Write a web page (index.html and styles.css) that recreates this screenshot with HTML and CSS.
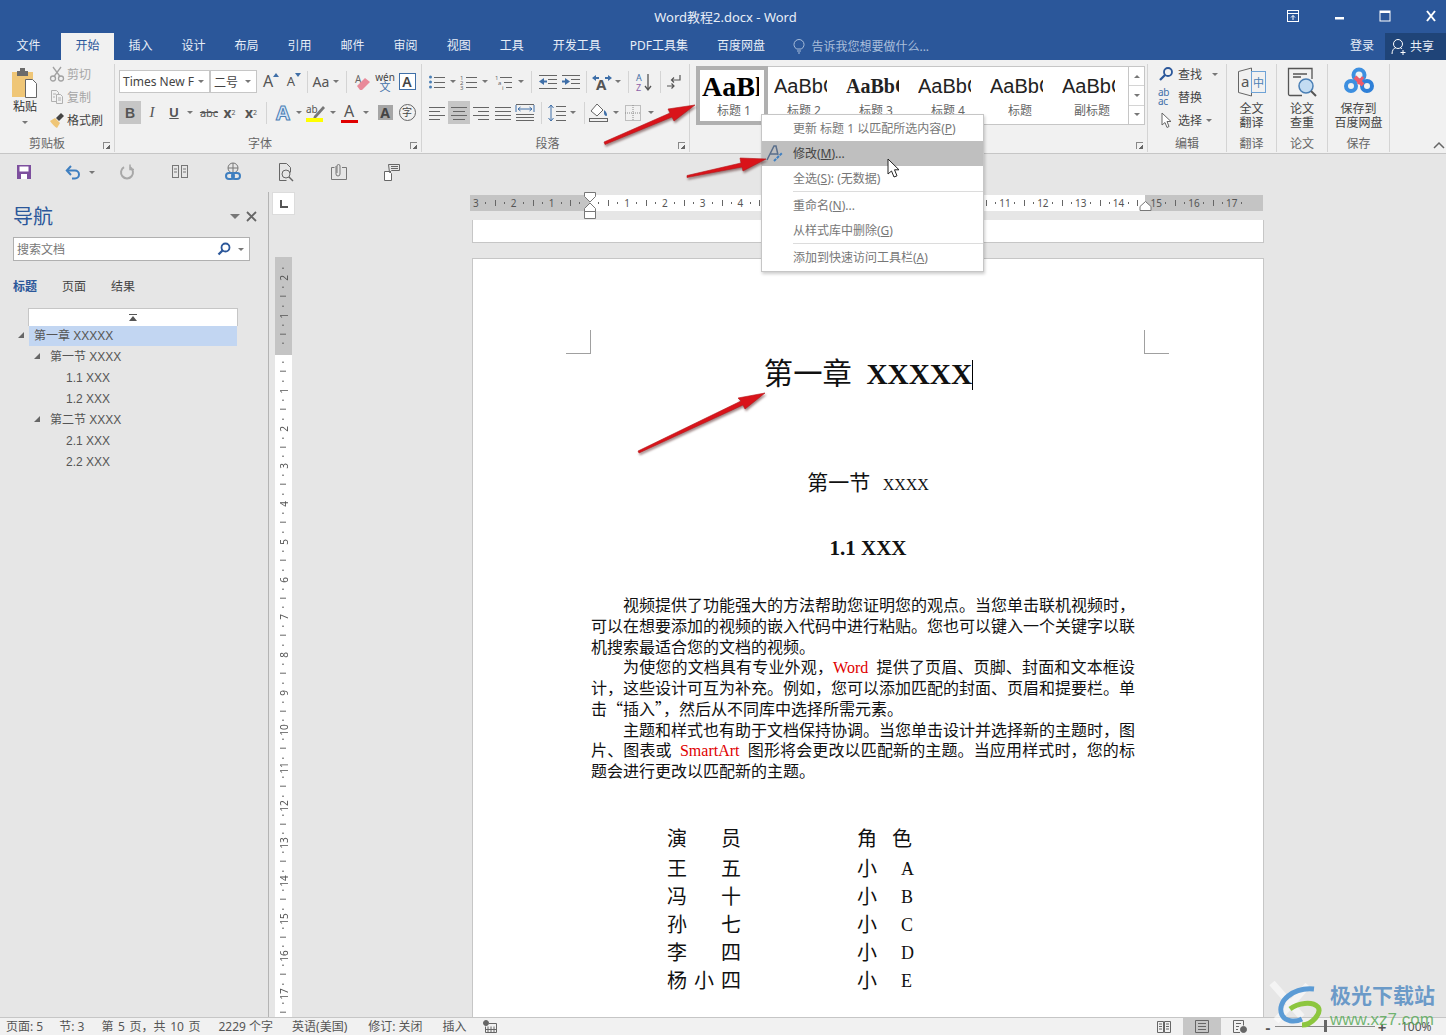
FILE: index.html
```html
<!DOCTYPE html>
<html lang="zh-CN">
  <head>
    <meta charset="UTF-8" />
    <title>Word教程2.docx - Word</title>
    <link rel="stylesheet" href="styles.css">
  </head>
  <body>
    <div class="app">
      <!-- title bar -->
      <div class="titlebar">
        <span class="doc-title">Word教程2.docx - Word</span>
        <div class="win-btns">
          <svg class="win-btn" width="14" height="14" viewBox="0 0 14 14" fill="none" stroke="#fff"><rect x="1.5" y="1.5" width="11" height="11"/><path d="M1.5 4.5h11M7 11V6.5M5 8.5l2-2 2 2"/></svg>
          <svg class="win-btn" width="14" height="14" viewBox="0 0 14 14" fill="#fff"><rect x="3" y="8" width="9" height="2.5"/></svg>
          <svg class="win-btn" width="14" height="14" viewBox="0 0 14 14" fill="none" stroke="#fff"><rect x="2" y="2" width="10" height="10"/><path d="M2 3h10" stroke-width="2"/></svg>
          <svg class="win-btn" width="14" height="14" viewBox="0 0 14 14" fill="none" stroke="#fff" stroke-width="2"><path d="M3 2l8 10M11 2L3 12"/></svg>
        </div>
      </div>

      <!-- tabs -->
      <div class="tabbar">
        <span class="tab tab-file">文件</span>
        <span class="tab active">开始</span>
        <span class="tab">插入</span>
        <span class="tab">设计</span>
        <span class="tab">布局</span>
        <span class="tab">引用</span>
        <span class="tab">邮件</span>
        <span class="tab">审阅</span>
        <span class="tab">视图</span>
        <span class="tab">工具</span>
        <span class="tab">开发工具</span>
        <span class="tab">PDF工具集</span>
        <span class="tab">百度网盘</span>
        <div class="tell-me">
          <svg width="12" height="15" viewBox="0 0 12 15" fill="none" stroke="#a9bedb"><path d="M3.5 10C2 8.500 1 7.500 1 5.500a5 5 0 0 1 10 0c0 2-1 3-2.500 4.500zM4 12h4M5 14h2"/></svg>
          <span>告诉我您想要做什么...</span>
        </div>
        <span class="login">登录</span>
        <div class="share">
          <svg width="16" height="18" viewBox="0 0 16 18" fill="none" stroke="#fff"><circle cx="7" cy="6" r="4.500"/><path d="M1 16c0-4 2-6 4-6.500M9 9.500c1 .3 1.500.7 2 1.500M12 12v5M9.500 14.500h5"/></svg>
          <span>共享</span>
        </div>
      </div>

      <!-- ribbon -->
      <div class="ribbon">
        <div class="group g-clip">
          <div class="clip-body">
            <div class="paste">
              <svg width="28" height="30" viewBox="0 0 28 30"><rect x="1" y="4" width="21" height="25" fill="#efc677"/><rect x="6" y="3" width="11" height="5" fill="#6b6b6b"/><rect x="9" y="0" width="5" height="4" fill="#6b6b6b"/><path d="M14.500 11.500h7l4 4v14h-11z" fill="#fff" stroke="#666"/></svg>
              <span class="paste-label">粘贴</span>
              <i class="caret"></i>
            </div>
            <div class="clip-list">
              <div class="clip-row off">
                <svg width="16" height="16" viewBox="0 0 16 16" fill="none" stroke="#a2a2a2" stroke-width="1.300"><circle cx="4" cy="12.500" r="2.500"/><circle cx="12" cy="12.500" r="2.500"/><path d="M5 10.500L12 1M11 10.500L4 1"/></svg>
                <span>剪切</span>
              </div>
              <div class="clip-row off">
                <svg width="16" height="16" viewBox="0 0 16 16" fill="#f1f1f1" stroke="#b0b0b0"><path d="M2.500 1.500h5l2 2v9h-7z"/><path d="M7.500 5.500h4l2 2v7h-6z"/><path d="M4 5h3M4 8h2M9 9h3M9 11h3" fill="none"/></svg>
                <span>复制</span>
              </div>
              <div class="clip-row">
                <svg width="16" height="16" viewBox="0 0 16 16"><path d="M1 9l5-3 5 5-3 5c-2-1-5-4-7-7z" fill="#efc677"/><path d="M7 6l5-5 3 3-5 5z" fill="#444"/></svg>
                <span>格式刷</span>
              </div>
            </div>
          </div>
          <div class="group-label">剪贴板</div>
          <i class="launcher"></i>
        </div>

        <div class="group g-font">
          <div class="rows">
            <div class="row">
              <div class="combo combo-font"><span>Times New F</span><i class="caret"></i></div>
              <div class="combo combo-size"><span>二号</span><i class="caret"></i></div>
              <div class="ib w24 ml1 grow-a">A<svg width="6" height="4" viewBox="0 0 6 4"><path d="M0 4l3-4 3 4z" fill="#3f6fa8"/></svg></div>
              <div class="ib w22 shrink-a">A<svg width="6" height="4" viewBox="0 0 6 4"><path d="M0 0l3 4 3-4z" fill="#3f6fa8"/></svg></div>
              <i class="vsep s-a"></i>
              <div class="ib w18 case-a">Aa</div>
              <div class="ib w12"><i class="caret"></i></div>
              <i class="vsep s-b"></i>
              <div class="ib w22">
                <svg width="18" height="18" viewBox="0 0 18 18"><text x="1" y="10" class="t-a">A</text><path d="M3 13l8-8 5 4-8 8H6z" fill="#e98a9a"/></svg>
              </div>
              <div class="ib w22 wen"><span class="wen-top">wén</span><span class="wen-bot">文</span></div>
              <div class="ib w22"><span class="box-a">A</span></div>
            </div>
            <div class="row">
              <div class="ib w22 on t-bold">B</div>
              <div class="ib w22 t-ital">I</div>
              <div class="ib w22 t-under">U</div>
              <div class="ib w10"><i class="caret"></i></div>
              <div class="ib w24 ml1 t-strike">abc</div>
              <div class="ib w21 mln2 t-sub">x<sub>2</sub></div>
              <div class="ib w22 t-sub">x<sup>2</sup></div>
              <i class="vsep s-c"></i>
              <div class="ib w22 fx-a">A</div>
              <div class="ib w10"><i class="caret"></i></div>
              <div class="ib w24">
                <svg width="22" height="20" viewBox="0 0 22 20"><text x="1" y="10" class="t-ab">ab</text><path d="M9 13l9-10 2 2-9 10-3 1z" fill="#777"/><rect x="1" y="15" width="17" height="4" fill="#ffff00"/></svg>
              </div>
              <div class="ib w10"><i class="caret"></i></div>
              <div class="ib w22 red-a"><span>A</span></div>
              <div class="ib w12"><i class="caret"></i></div>
              <div class="ib w22 ml1"><span class="gray-a">A</span></div>
              <div class="ib w22"><span class="circle-zi">字</span></div>
            </div>
          </div>
          <div class="group-label">字体</div>
          <i class="launcher"></i>
        </div>

        <div class="group g-para">
          <div class="rows">
            <div class="row">
              <div class="ib w22 ml4"><svg width="18" height="16" viewBox="0 0 18 16" stroke="#666" fill="#4a7fb5"><circle cx="2.500" cy="3" r="1.500" stroke="none"/><circle cx="2.500" cy="8" r="1.500" stroke="none"/><circle cx="2.500" cy="13" r="1.500" stroke="none"/><path d="M6 3.500h11M6 8.500h11M6 13.500h11"/></svg></div>
              <div class="ib w10"><i class="caret"></i></div>
              <div class="ib w22"><svg width="18" height="16" viewBox="0 0 18 16" stroke="#666"><text x="0" y="6" class="t-n">1</text><text x="0" y="11" class="t-n">2</text><text x="0" y="16" class="t-n">3</text><path d="M6 3.500h11M6 8.500h11M6 13.500h11"/></svg></div>
              <div class="ib w10"><i class="caret"></i></div>
              <div class="ib w24 ml1"><svg width="18" height="16" viewBox="0 0 18 16" stroke="#666"><text x="0" y="6" class="t-n">1</text><text x="3" y="11" class="t-n">a</text><text x="7" y="16" class="t-n">i</text><path d="M5 3.500h12M9 8.500h8M11 13.500h6"/></svg></div>
              <div class="ib w10"><i class="caret"></i></div>
              <i class="vsep s-d"></i>
              <div class="ib w22"><svg width="20" height="16" viewBox="0 0 20 16" stroke="#666"><path d="M1 1.500h18M10 5.500h9M10 9.500h9M1 14.500h18"/><path d="M1 7.500l5-3.500v7z" fill="#3f6fa8" stroke="none"/><path d="M5 7.500h4" stroke="#3f6fa8" stroke-width="2"/></svg></div>
              <div class="ib w23"><svg width="20" height="16" viewBox="0 0 20 16" stroke="#666"><path d="M1 1.500h18M10 5.500h9M10 9.500h9M1 14.500h18"/><path d="M9 7.500l-5-3.500v7z" fill="#3f6fa8" stroke="none"/><path d="M1 7.500h4" stroke="#3f6fa8" stroke-width="2"/></svg></div>
              <i class="vsep s-e"></i>
              <div class="ib w22"><svg width="22" height="18" viewBox="0 0 22 18"><text x="5" y="17" class="t-big">A</text><path d="M1 5l4-3v2h3v2H5v2zM21 5l-4-3v2h-3v2h3v2z" fill="#3f6fa8"/></svg></div>
              <div class="ib w10"><i class="caret"></i></div>
              <i class="vsep s-f"></i>
              <div class="ib w22"><svg width="18" height="20" viewBox="0 0 18 20" fill="none"><text x="1" y="9" class="t-az1">A</text><text x="1" y="19" class="t-az2">Z</text><path d="M13 2v15M10 14l3 4 3-4" stroke="#555" stroke-width="1.300"/></svg></div>
              <i class="vsep s-g"></i>
              <div class="ib w22"><svg width="16" height="16" viewBox="0 0 16 16" fill="none" stroke="#555" stroke-width="1.200"><path d="M14 1v5H6M8 3.500L5.500 6 8 8.500"/><path d="M1 12h7M5.500 9.500L8 12l-2.500 2.500"/></svg></div>
            </div>
            <div class="row">
              <div class="ib w22 ml4"><svg width="18" height="14" viewBox="0 0 18 14" stroke="#666"><path d="M1 1.500h16M1 5.500h11M1 9.500h16M1 13.500h11"/></svg></div>
              <div class="ib w22 on"><svg width="18" height="14" viewBox="0 0 18 14" stroke="#666"><path d="M1 1.500h16M3 5.500h12M1 9.500h16M3 13.500h12"/></svg></div>
              <div class="ib w22"><svg width="18" height="14" viewBox="0 0 18 14" stroke="#666"><path d="M1 1.500h16M6 5.500h11M1 9.500h16M6 13.500h11"/></svg></div>
              <div class="ib w22"><svg width="18" height="14" viewBox="0 0 18 14" stroke="#666"><path d="M1 1.500h16M1 5.500h16M1 9.500h16M1 13.500h16"/></svg></div>
              <div class="ib w22"><svg width="20" height="20" viewBox="0 0 20 20" stroke="#666" fill="none"><path d="M1 1.500h18M1 11.500h18M1 14.500h18M1 17.500h18"/><path d="M1 2v7M19 2v7" stroke="#3f6fa8"/><path d="M3 6h14M3 6l2.500-2M3 6l2.500 2M17 6l-2.500-2M17 6l-2.500 2" stroke="#3f6fa8"/></svg></div>
              <i class="vsep s-h"></i>
              <div class="ib w22"><svg width="20" height="20" viewBox="0 0 20 20" fill="none" stroke="#666"><path d="M9 3.500h10M9 8.500h10M9 12.500h10M9 17.500h10"/><path d="M4 2v16M1.500 5L4 2l2.500 3M1.500 15L4 18l2.500-3" stroke="#3f6fa8"/></svg></div>
              <div class="ib w10"><i class="caret"></i></div>
              <i class="vsep s-i"></i>
              <div class="ib w24"><svg width="22" height="20" viewBox="0 0 22 20" fill="#fff" stroke="#666"><path d="M3 8l6-7 6 6-6 6z"/><path d="M16 7c2 2 3 3 3 5s-3 1-3-2z" fill="#3f6fa8" stroke="none"/><rect x="1.500" y="15.500" width="18" height="3" fill="#f1f1f1"/></svg></div>
              <div class="ib w10"><i class="caret"></i></div>
              <div class="ib w24"><svg width="18" height="18" viewBox="0 0 18 18" fill="none" stroke="#8a8a8a" stroke-dasharray="1 1"><rect x="1.500" y="1.500" width="15" height="15"/><path d="M9 1v16M1 9h16"/></svg></div>
              <div class="ib w12"><i class="caret"></i></div>
            </div>
          </div>
          <div class="group-label">段落</div>
          <i class="launcher"></i>
        </div>

        <div class="group g-styles">
          <div class="gallery">
            <div class="style-item selected"><span class="pv pv-h1">AaBl</span><span class="style-name">标题 1</span></div>
            <div class="style-item"><span class="pv">AaBbC</span><span class="style-name">标题 2</span></div>
            <div class="style-item"><span class="pv pv-h3">AaBbC</span><span class="style-name">标题 3</span></div>
            <div class="style-item"><span class="pv">AaBbC</span><span class="style-name">标题 4</span></div>
            <div class="style-item"><span class="pv">AaBbC</span><span class="style-name">标题</span></div>
            <div class="style-item"><span class="pv">AaBbC</span><span class="style-name">副标题</span></div>
            <div class="gallery-scroll">
              <div class="gs-btn"><i class="tri-up"></i></div>
              <div class="gs-btn"><i class="caret"></i></div>
              <div class="gs-btn gs-more"><i class="caret"></i></div>
            </div>
          </div>
          <i class="launcher"></i>
        </div>

        <div class="group g-edit">
          <div class="edit-list">
            <div class="edit-row">
              <svg width="16" height="16" viewBox="0 0 16 16" fill="none" stroke="#2b579a" stroke-width="1.800"><circle cx="10" cy="6" r="4"/><path d="M7 9l-5 5" stroke-width="2.300"/></svg>
              <span>查找</span><i class="caret edit-caret"></i>
            </div>
            <div class="edit-row">
              <span class="abac">ab<br>ac</span>
              <span>替换</span>
            </div>
            <div class="edit-row">
              <svg width="16" height="17" viewBox="0 0 16 17" fill="#fff" stroke="#666"><path d="M4 1v12l3-2.500 2 5 2-1-2-5h4z"/></svg>
              <span>选择</span><i class="caret"></i>
            </div>
          </div>
          <div class="group-label">编辑</div>
        </div>

        <div class="group g-trans">
          <div class="big-btn">
            <svg width="30" height="30" viewBox="0 0 30 30" fill="none"><path d="M1.500 4.500l13-3.500v28l-13-3.500z" stroke="#666"/><text x="4" y="20" class="t-a-big">a</text><rect x="14.500" y="4.500" width="14" height="21" stroke="#6fa3d6"/><text x="16" y="20" class="t-zh">中</text></svg>
            <span>全文</span><span>翻译</span>
          </div>
          <div class="group-label">翻译</div>
        </div>

        <div class="group g-paper">
          <div class="big-btn">
            <svg width="30" height="30" viewBox="0 0 30 30" fill="none"><path d="M15 28.500H3a1.500 1.500 0 0 1-1.500-1.500V1.500H25V12" stroke="#555" stroke-width="1.300"/><path d="M6 7h14M6 10h8" stroke="#555" stroke-width="1.500"/><circle cx="19" cy="19" r="7" fill="#c3dcf2" stroke="#4a7fb5" stroke-width="1.500"/><path d="M24 24l5 5" stroke="#555" stroke-width="2"/></svg>
            <span>论文</span><span>查重</span>
          </div>
          <div class="group-label">论文</div>
        </div>

        <div class="group g-save">
          <div class="big-btn">
            <svg width="30" height="30" viewBox="0 0 30 30" fill="none"><circle cx="15" cy="8" r="5.500" stroke="#3d8fe0" stroke-width="4"/><circle cx="7" cy="19" r="5" stroke="#3d8fe0" stroke-width="4"/><circle cx="23" cy="19" r="5" stroke="#2f80d8" stroke-width="4"/><path d="M11 10l8 8" stroke="#ef5a6a" stroke-width="4"/><path d="M19 10l-5 7" stroke="#ef5a6a" stroke-width="3"/></svg>
            <span>保存到</span><span>百度网盘</span>
          </div>
          <div class="group-label">保存</div>
        </div>

        <svg class="ribbon-collapse" width="12" height="8" viewBox="0 0 12 8" fill="none" stroke="#666" stroke-width="1.500"><path d="M1 7l5-5 5 5"/></svg>
      </div>

      <!-- quick access -->
      <div class="qat">
        <div class="qb q-save"><svg width="16" height="16" viewBox="0 0 16 16"><path d="M1 1h14v14H1z" fill="#7d4f9e"/><rect x="3.500" y="2.500" width="9" height="5" fill="#fff"/><rect x="5" y="10" width="6" height="5" fill="#fff"/></svg></div>
        <div class="qb q-undo"><svg width="16" height="16" viewBox="0 0 16 16" fill="none" stroke="#3f7fc0" stroke-width="2"><path d="M2 6.500h8a4 4 0 0 1 0 8H7"/><path d="M6 2L1.800 6.500 6 11"/></svg></div>
        <div class="qb q-caret"><i class="caret"></i></div>
        <div class="qb q-redo"><svg width="16" height="16" viewBox="0 0 16 16" fill="none" stroke="#a8a8a8" stroke-width="2"><path d="M5 3.200A6 6 0 1 0 11 3.200"/><path d="M11 .5v5h4" stroke-width="1.500"/></svg></div>
        <div class="qb q-far"><svg width="18" height="14" viewBox="0 0 18 14" fill="none" stroke="#777"><rect x="1.500" y=".5" width="6" height="12"/><rect x="10.500" y=".5" width="6" height="12"/><path d="M3 4h3M3 7h3M12 4h3M12 7h3"/></svg></div>
        <div class="qb q-far"><svg width="18" height="20" viewBox="0 0 18 20" fill="none"><circle cx="9" cy="6" r="5" stroke="#777"/><path d="M4 6h10M9 1v10" stroke="#777"/><rect x="2" y="11" width="8" height="6" rx="3" stroke="#3f7fc0" stroke-width="2"/><rect x="8" y="11" width="8" height="6" rx="3" stroke="#3f7fc0" stroke-width="2"/></svg></div>
        <div class="qb q-far"><svg width="18" height="20" viewBox="0 0 18 20" fill="none" stroke="#666"><path d="M2.500 1.500h7l4 4v5M2.500 1.500v17h7"/><circle cx="9" cy="12" r="4"/><path d="M12 15l4 4" stroke-width="1.500"/></svg></div>
        <div class="qb q-far"><svg width="18" height="18" viewBox="0 0 18 18" fill="none" stroke="#777"><path d="M1.500 4.500h3M12 4.500h4.500v12h-15v-12"/><path d="M6 3v8a2 2 0 0 0 4 0V3a1.500 1.500 0 0 0-3 0v7"/></svg></div>
        <div class="qb q-far"><svg width="18" height="18" viewBox="0 0 18 18" fill="#fff" stroke="#666"><path d="M1.500 8.500h5l2 2v7h-7z"/><path d="M5.500 1.500h11v6h-8l-2 2zM8 3.500h7M8 5.500h7" fill="none"/></svg></div>
      </div>

      <div class="workspace">
        <!-- navigation pane -->
        <aside class="nav">
          <div class="nav-head">
            <span class="nav-title">导航</span>
            <i class="nav-drop"></i>
            <svg class="nav-close" width="11" height="11" viewBox="0 0 11 11" fill="none" stroke="#666" stroke-width="1.800"><path d="M1 1l9 9M10 1l-9 9"/></svg>
          </div>
          <div class="nav-search">
            <span>搜索文档</span>
            <svg width="14" height="14" viewBox="0 0 14 14" fill="none" stroke="#2b579a" stroke-width="1.800"><circle cx="8.500" cy="5.500" r="4"/><path d="M5.500 8.500L1.500 12.500" stroke-width="2.300"/></svg>
            <i class="caret"></i>
          </div>
          <div class="nav-tabs">
            <span class="nav-tab on">标题</span>
            <span class="nav-tab">页面</span>
            <span class="nav-tab">结果</span>
          </div>
          <div class="nav-top"><svg width="8" height="7" viewBox="0 0 8 7"><path d="M0 0h8v1H0zM4 2l4 5H0z" fill="#555"/></svg></div>
          <ul class="tree">
            <li class="lv1 sel"><i class="tw"></i>第一章 XXXXX</li>
            <li class="lv2"><i class="tw"></i>第一节 XXXX</li>
            <li class="lv3">1.1 XXX</li>
            <li class="lv3">1.2 XXX</li>
            <li class="lv2"><i class="tw"></i>第二节 XXXX</li>
            <li class="lv3">2.1 XXX</li>
            <li class="lv3">2.2 XXX</li>
          </ul>
        </aside>

        <!-- vertical ruler -->
        <div class="vcol">
          <div class="corner"><i class="corner-l"></i></div>
          <div class="vruler">
            <span class="vc">2</span><span class="vc">1</span><span class="vc"></span><span class="vc">1</span><span class="vc">2</span><span class="vc">3</span><span class="vc">4</span><span class="vc">5</span><span class="vc">6</span><span class="vc">7</span><span class="vc">8</span><span class="vc">9</span><span class="vc">10</span><span class="vc">11</span><span class="vc">12</span><span class="vc">13</span><span class="vc">14</span><span class="vc">15</span><span class="vc">16</span><span class="vc">17</span><span class="vc"></span>
          </div>
        </div>

        <div class="doc-col">
          <div class="hruler">
            <div class="hcells">
              <span class="hc">3</span><span class="hc">2</span><span class="hc">1</span><span class="hc"></span><span class="hc">1</span><span class="hc">2</span><span class="hc">3</span><span class="hc">4</span><span class="hc">5</span><span class="hc">6</span><span class="hc">7</span><span class="hc">8</span><span class="hc">9</span><span class="hc">10</span><span class="hc">11</span><span class="hc">12</span><span class="hc">13</span><span class="hc">14</span><span class="hc">15</span><span class="hc">16</span><span class="hc">17</span>
            </div>
            <svg class="marker-left" width="14" height="28" viewBox="0 0 14 28" fill="#fff" stroke="#777"><path d="M1.500 .5h11v4L7 10 1.500 4.500zM7 11l5.500 5.500v3h-11v-3zM1.500 19.500h11v7h-11z"/></svg>
            <svg class="marker-right" width="13" height="10" viewBox="0 0 13 10" fill="#fff" stroke="#777"><path d="M1 9.500v-4L6.500 .5 12 5.500v4z"/></svg>
          </div>
          <div class="page-tail"></div>
          <div class="page">
            <i class="crop crop-l"></i>
            <i class="crop crop-r"></i>
            <h1 class="h-1">第一章&nbsp;&nbsp;<b>XXXXX</b><i class="text-cursor"></i></h1>
            <h2 class="h-2">第一节&nbsp;&nbsp;<span class="h-2-x">XXXX</span></h2>
            <h3 class="h-3">1.1 XXX</h3>
            <div class="body-text">
              <p>视频提供了功能强大的方法帮助您证明您的观点。当您单击联机视频时，可以在想要添加的视频的嵌入代码中进行粘贴。您也可以键入一个关键字以联机搜索最适合您的文档的视频。</p>
              <p>为使您的文档具有专业外观，<span class="red">Word</span>&nbsp; 提供了页眉、页脚、封面和文本框设计，这些设计可互为补充。例如，您可以添加匹配的封面、页眉和提要栏。单击<span class="cjk">“插入”</span>，然后从不同库中选择所需元素。</p>
              <p>主题和样式也有助于文档保持协调。当您单击设计并选择新的主题时，图片、图表或&nbsp; <span class="red">SmartArt</span>&nbsp; 图形将会更改以匹配新的主题。当应用样式时，您的标题会进行更改以匹配新的主题。</p>
            </div>
            <div class="cast">
              <div class="cast-row first"><div class="who"><span>演</span><span></span><span>员</span></div><div class="role head"><span>角</span><span>色</span></div></div>
              <div class="cast-row"><div class="who"><span>王</span><span></span><span>五</span></div><div class="role"><span>小</span><span class="ltr">A</span></div></div>
              <div class="cast-row"><div class="who"><span>冯</span><span></span><span>十</span></div><div class="role"><span>小</span><span class="ltr">B</span></div></div>
              <div class="cast-row"><div class="who"><span>孙</span><span></span><span>七</span></div><div class="role"><span>小</span><span class="ltr">C</span></div></div>
              <div class="cast-row"><div class="who"><span>李</span><span></span><span>四</span></div><div class="role"><span>小</span><span class="ltr">D</span></div></div>
              <div class="cast-row"><div class="who"><span>杨</span><span>小</span><span>四</span></div><div class="role"><span>小</span><span class="ltr">E</span></div></div>
            </div>
          </div>
        </div>
      </div>

      <!-- status bar -->
      <div class="statusbar">
        <span>页面: 5</span>
        <span>节: 3</span>
        <span class="st-page">第 5 页，共 10 页</span>
        <span>2229 个字</span>
        <span>英语(美国)</span>
        <span>修订: 关闭</span>
        <span>插入</span>
        <svg width="14" height="13" viewBox="0 0 14 13" fill="none" stroke="#666"><circle cx="3" cy="3" r="2.500" fill="#666"/><path d="M6 3.500h7.500v9h-11v-6M5 6.500v6M8 6.500v6M11 6.500v6M3 9.500h10"/></svg>
        <div class="views">
          <div class="vb"><svg width="14" height="13" viewBox="0 0 14 13" fill="none" stroke="#666"><path d="M.5 1.500h6v11h-6zM7.500 1.500h6v11h-6zM2 4h3M2 6.500h3M2 9h3M9 4h3M9 6.500h3M9 9h3"/></svg></div>
          <div class="vb on"><svg width="14" height="13" viewBox="0 0 14 13" fill="none" stroke="#666"><path d="M.5 .5h13v12H.5zM3 3.500h8M3 6.500h8M3 9.500h8"/></svg></div>
          <div class="vb"><svg width="14" height="13" viewBox="0 0 14 13" fill="none" stroke="#666"><path d="M7 12.500H.5V.5h10v5M3 3.500h5M3 6.500h3M3 9.500h2"/><circle cx="10.500" cy="9.500" r="3" fill="#666"/></svg></div>
          <div class="zoom-bar">
            <span class="z-btn">-</span>
            <div class="z-track"><i class="z-thumb"></i></div>
            <span class="z-btn">+</span>
            <span class="z-pct">100%</span>
          </div>
        </div>
      </div>

      <!-- style context menu -->
      <div class="menu">
        <div class="menu-item">更新 标题 1 以匹配所选内容(<u>P</u>)</div>
        <div class="menu-item hot">
          <svg class="menu-ic" width="18" height="18" viewBox="0 0 18 18" fill="none"><path d="M1 15L8 1h2l2 9M4 9h7" stroke="#5a6f8c" stroke-width="1.500"/><path d="M8 16l8-8" stroke="#3f7fc0" stroke-width="2" stroke-dasharray="3 1"/></svg>
          修改(<u>M</u>)...
        </div>
        <div class="menu-item">全选(<u>S</u>): (无数据)</div>
        <i class="menu-sep"></i>
        <div class="menu-item">重命名(<u>N</u>)...</div>
        <div class="menu-item">从样式库中删除(<u>G</u>)</div>
        <i class="menu-sep"></i>
        <div class="menu-item">添加到快速访问工具栏(<u>A</u>)</div>
      </div>
      <svg class="cursor" width="14" height="21" viewBox="0 0 14 21" fill="#fff" stroke="#222"><path d="M1 1v15l3.500-3 2.500 6 3-1.200-2.500-6H12z"/></svg>

      <!-- annotation arrows -->
      <svg class="arrows" width="800" height="470" viewBox="0 0 800 470">
        <g fill="#d9131a" stroke="#b3151a" stroke-width=".6" class="arrow-g">
          <polygon points="604,142 670,113 668,109 695,105 674,121 672,117 605,144.500"/>
          <polygon points="687,175.500 741,163 740,158 766,159 743,171 742,167 687,177.500"/>
          <polygon points="638,451 741,401 738,398 765,393 745,409 743,405 639,453"/>
        </g>
      </svg>

      <!-- watermark -->
      <div class="watermark">
        <svg class="wm-logo" width="62" height="52" viewBox="0 0 62 52" fill="none">
          <path d="M4 2l30 34M40 4L8 40" stroke="#fff" stroke-width="7" opacity=".55"/>
          <path d="M46 8C26 6 8 20 14 34c3 6 12 8 20 4" stroke="#5b9bd5" stroke-width="5"/>
          <path d="M22 28c8-6 22-8 28-2 4 6-6 18-16 18" stroke="#8cc63f" stroke-width="5"/>
        </svg>
        <div class="wm-text">
          <span class="wm-cn">极光下载站</span>
          <span class="wm-url">www.xz7.com</span>
        </div>
      </div>
    </div>
  </body>
</html>
```

FILE: styles.css
```css
html,
body {
  margin: 0;
  padding: 0;
  height: 100%;
  overflow: hidden;
}

body {
  font-family: "Noto Sans", "Noto Sans CJK SC", sans-serif;
  font-size: 12px;
  color: #444;
  background-color: #e6e6e6;
}

i {
  display: block;
  font-style: normal;
}

svg {
  display: block;
  flex: none;
}

.app {
  position: relative;
  display: flex;
  flex-direction: column;
  width: 1446px;
  height: 1035px;
  overflow: hidden;
}

/* title bar */
.titlebar {
  position: relative;
  flex: 0 0 33px;
  display: flex;
  justify-content: center;
  align-items: center;
  background-color: #2b579a;
  color: #e8eef7;
  font-size: 13px;
  line-height: 18px;
}

.doc-title {
  margin-left: 5px;
}

.win-btns {
  position: absolute;
  right: 8px;
  top: 9px;
  display: flex;
  gap: 32px;
}

/* tabs */
.tabbar {
  flex: 0 0 27px;
  display: flex;
  align-items: stretch;
  padding-left: 2px;
  background-color: #2b579a;
  color: #e8eef7;
  line-height: 26px;
}

.tab {
  padding: 0 14.5px;
}

.tab-file {
  margin-right: 6px;
}

.tab.active {
  background-color: #f1f1f1;
  color: #2b579a;
}

.tell-me {
  display: flex;
  align-items: center;
  gap: 6px;
  margin-left: 14px;
  color: #a9bedb;
}

.login {
  margin-left: auto;
  margin-right: 11px;
}

.share {
  flex: 0 0 61px;
  display: flex;
  align-items: center;
  gap: 3px;
  padding-left: 6px;
  box-sizing: border-box;
  background-color: #1f4478;
}

/* ribbon */
.ribbon {
  position: relative;
  flex: 0 0 94px;
  box-sizing: border-box;
  display: flex;
  background-color: #f1f1f1;
  border-bottom: 1px solid #c6c6c6;
}

.group {
  position: relative;
  box-sizing: border-box;
  display: flex;
  flex-direction: column;
  margin-top: 4px;
  height: 88px;
  border-right: 1px solid #d4d4d4;
}

.group-label {
  position: absolute;
  left: 0;
  right: 0;
  bottom: 0;
  text-align: center;
  line-height: 16px;
  color: #666;
}

.g-clip .group-label {
  right: 20px;
}

.g-font .group-label,
.g-para .group-label {
  right: 16px;
}

.launcher {
  position: absolute;
  right: 4px;
  bottom: 3px;
  width: 7px;
  height: 7px;
  border-left: 1px solid #888;
  border-top: 1px solid #888;
  box-sizing: border-box;
}

.launcher::after {
  content: "";
  display: block;
  margin: 2px 0 0 2px;
  width: 4px;
  height: 4px;
  background: linear-gradient(135deg, transparent 50%, #666 50%);
}

.g-clip {
  width: 115px;
}

.g-font {
  width: 307px;
  padding-left: 4px;
}

.g-para {
  width: 268px;
}

.g-styles {
  width: 458px;
  padding-left: 6px;
}

.g-edit {
  width: 79px;
}

.g-trans {
  width: 50px;
}

.g-paper {
  width: 51px;
}

.g-save {
  width: 62px;
}

.ribbon-collapse {
  position: absolute;
  right: 1px;
  bottom: 4px;
}

.caret {
  width: 0;
  height: 0;
  border-left: 3px solid transparent;
  border-right: 3px solid transparent;
  border-top: 3px solid #777;
}

/* clipboard */
.clip-body {
  display: flex;
  padding-left: 11px;
}

.paste {
  display: flex;
  flex-direction: column;
  align-items: center;
  width: 28px;
  padding-top: 4px;
}

.paste-label {
  line-height: 18px;
  white-space: nowrap;
  color: #333;
}

.paste .caret {
  margin-top: 5px;
}

.clip-list {
  display: flex;
  flex-direction: column;
  gap: 7px;
  margin-left: 10px;
  padding-top: 2px;
}

.clip-row {
  display: flex;
  align-items: center;
  gap: 2px;
  height: 16px;
  white-space: nowrap;
  color: #444;
}

.clip-row.off {
  color: #a6a6a6;
}

/* font + paragraph rows */
.rows {
  display: flex;
  flex-direction: column;
  gap: 8px;
  padding-top: 6px;
}

.row {
  display: flex;
  align-items: center;
  height: 23px;
}

.combo {
  box-sizing: border-box;
  display: flex;
  align-items: center;
  height: 23px;
  background-color: #fff;
  border: 1px solid #c6c6c6;
  font-size: 12px;
  padding: 0 5px 0 3px;
  justify-content: space-between;
  white-space: nowrap;
  color: #444;
}

.combo-font {
  width: 91px;
}

.combo-size {
  width: 47px;
}

.ib {
  box-sizing: border-box;
  display: flex;
  align-items: center;
  justify-content: center;
  height: 23px;
  flex: none;
}

.ib.on {
  background-color: #c6c6c6;
}

.w10 {
  width: 10px;
}

.w12 {
  width: 12px;
}

.w18 {
  width: 18px;
}

.w21 {
  width: 21px;
}

.w22 {
  width: 22px;
}

.w23 {
  width: 23px;
}

.w24 {
  width: 24px;
}

.ml1 {
  margin-left: 2px;
}

.mln2 {
  margin-left: -2px;
}

.ml4 {
  margin-left: 4px;
}

.vsep {
  flex: none;
  width: 1px;
  height: 22px;
  background-color: #d4d4d4;
}

.s-a {
  margin: 0 4px 0 2px;
}

.s-b {
  margin: 0 5px 0 4px;
}

.s-c {
  margin: 0 5px 0 4px;
}

.s-d {
  margin: 0 5px 0 5px;
}

.s-e {
  margin: 0 4px 0 4px;
}

.s-f {
  margin: 0 4px 0 5px;
}

.s-g {
  margin: 0 2px 0 5px;
}

.s-h {
  margin: 0 4px 0 5px;
}

.s-i {
  margin: 0 2px 0 6px;
}

.grow-a,
.shrink-a {
  align-items: flex-end;
  padding-bottom: 3px;
  font-size: 16px;
  line-height: 17px;
  color: #555;
}

.shrink-a {
  font-size: 13px;
}

.grow-a svg,
.shrink-a svg {
  align-self: flex-start;
  margin-top: 3px;
}

.case-a {
  font-size: 14px;
  color: #555;
}

.wen {
  flex-direction: column;
  line-height: 10px;
}

.wen-top {
  font-size: 10px;
  color: #444;
}

.wen-bot {
  font-size: 11px;
  color: #3f6fa8;
}

.box-a {
  box-sizing: border-box;
  width: 17px;
  height: 17px;
  border: 1px solid #3f6fa8;
  text-align: center;
  line-height: 15px;
  font-size: 14px;
  font-weight: 600;
  color: #444;
  background-color: #fff;
}

.t-bold {
  font-family: "Liberation Sans", sans-serif;
  font-weight: 700;
  font-size: 14px;
  color: #555;
}

.t-ital {
  font-family: "Liberation Serif", serif;
  font-style: italic;
  font-size: 15px;
  color: #555;
}

.t-under {
  font-family: "Liberation Sans", sans-serif;
  font-size: 13px;
  font-weight: 700;
  text-decoration: underline;
  color: #555;
}

.t-strike {
  font-size: 11px;
  text-decoration: line-through;
  color: #555;
}

.t-sub {
  font-size: 14px;
  font-weight: 700;
  color: #555;
}

.t-sub sub,
.t-sub sup {
  font-size: 7px;
  font-weight: 400;
}

.fx-a {
  font-size: 20px;
  font-weight: 700;
  color: #d6e5f5;
  -webkit-text-stroke: 1px #4a7fb5;
}

.red-a span {
  border-bottom: 3px solid #e00000;
  width: 17px;
  text-align: center;
  font-size: 16px;
  line-height: 17px;
  color: #555;
}

.gray-a {
  width: 15px;
  height: 15px;
  text-align: center;
  line-height: 15px;
  font-size: 14px;
  font-weight: 700;
  color: #444;
  background-color: #a6a6a6;
}

.circle-zi {
  box-sizing: border-box;
  width: 17px;
  height: 17px;
  border: 1px solid #666;
  border-radius: 50%;
  text-align: center;
  font-size: 10px;
  line-height: 15px;
  color: #444;
}

.t-a {
  font-size: 10px;
  fill: #666;
}

.t-ab {
  font-size: 10px;
  fill: #555;
}

.t-n {
  font-size: 6px;
  fill: #666;
  stroke: none;
}

.t-big {
  font-size: 15px;
  font-weight: 700;
  fill: #555;
}

.t-az1 {
  font-size: 9px;
  fill: #3f6fa8;
}

.t-az2 {
  font-size: 9px;
  fill: #8d5fa8;
}

.t-a-big {
  font-size: 15px;
  fill: #555;
}

.t-zh {
  font-size: 11px;
  fill: #4a7fb5;
}

/* style gallery */
.gallery {
  box-sizing: border-box;
  display: flex;
  width: 449px;
  height: 59px;
  margin-top: -2px;
  position: relative;
  top: 4px;
  background-color: #fff;
  border: 1px solid #c6c6c6;
}

.style-item {
  box-sizing: border-box;
  flex: 0 0 72px;
  display: flex;
  flex-direction: column;
  align-items: center;
  overflow: hidden;
  padding: 4px 13px 0 6px;
}

.style-item.selected {
  padding: 1px 5px 0 2px;
  border: 4px solid #b0b0b0;
  margin-top: -1px;
  height: 59px;
  margin-left: -1px;
}

.pv {
  align-self: stretch;
  overflow: hidden;
  font-family: "Liberation Sans", sans-serif;
  font-size: 20px;
  line-height: 31px;
  white-space: nowrap;
  color: #222;
}

.pv-h1 {
  font-family: "Liberation Serif", serif;
  font-weight: 700;
  font-size: 28px;
  color: #000;
}

.pv-h3 {
  font-family: "Liberation Serif", serif;
  font-weight: 700;
  font-size: 20px;
}

.style-name {
  margin-top: 1px;
  margin-left: 7px;
  line-height: 16px;
  color: #666;
  white-space: nowrap;
}

.gallery-scroll {
  margin-left: auto;
  width: 17px;
  display: flex;
  flex-direction: column;
  border-left: 1px solid #c6c6c6;
}

.gs-btn {
  flex: 1;
  display: flex;
  align-items: center;
  justify-content: center;
  border-bottom: 1px solid #d4d4d4;
}

.gs-btn:last-child {
  border-bottom: 0;
}

.gs-more .caret {
  box-shadow: 0 -3px 0 -2px #777;
}

.tri-up {
  width: 0;
  height: 0;
  border-left: 3px solid transparent;
  border-right: 3px solid transparent;
  border-bottom: 3px solid #777;
}

/* edit, big buttons */
.edit-list {
  display: flex;
  flex-direction: column;
  gap: 7px;
  padding: 2px 0 0 10px;
}

.edit-row {
  display: flex;
  align-items: center;
  gap: 4px;
  height: 16px;
  white-space: nowrap;
}

.edit-caret {
  margin-left: 6px;
}

.abac {
  width: 16px;
  font-size: 10px;
  line-height: 9px;
  color: #3f6fa8;
  letter-spacing: -0.3px;
}

.big-btn {
  display: flex;
  flex-direction: column;
  align-items: center;
  line-height: 14px;
  white-space: nowrap;
  padding-top: 3px;
}

.big-btn svg {
  margin-bottom: 5px;
}

/* quick access */
.qat {
  flex: 0 0 36px;
  display: flex;
  align-items: center;
  padding-left: 13px;
  background-color: #e6e6e6;
}

.qb {
  flex: none;
  width: 22px;
  display: flex;
  align-items: center;
  justify-content: center;
}

.q-undo {
  margin-left: 27px;
}

.q-caret {
  width: 10px;
  margin-left: 3px;
}

.q-redo {
  margin-left: 19px;
}

.q-far {
  margin-left: 31px;
}

/* workspace */
.workspace {
  flex: 1;
  min-height: 0;
  display: flex;
  overflow: hidden;
}

.nav {
  box-sizing: border-box;
  flex: 0 0 269px;
  padding: 0 18px 0 13px;
  border-right: 1px solid #b4b4b4;
  margin-top: 2px;
}

.nav-head {
  display: flex;
  align-items: center;
  height: 45px;
  padding-top: 4px;
  box-sizing: border-box;
}

.nav-title {
  font-size: 20px;
  line-height: 24px;
  color: #2b579a;
}

.nav-drop {
  margin-left: auto;
  width: 0;
  height: 0;
  border-left: 5px solid transparent;
  border-right: 5px solid transparent;
  border-top: 5px solid #777;
}

.nav-close {
  margin: 0 -7px 0 6px;
}

.nav-search {
  box-sizing: border-box;
  display: flex;
  align-items: center;
  width: 237px;
  height: 24px;
  padding: 0 5px 0 3px;
  background-color: #fff;
  border: 1px solid #b0b0b0;
  color: #777;
}

.nav-search span {
  flex: 1;
}

.nav-search .caret {
  margin-left: 7px;
}

.nav-tabs {
  display: flex;
  gap: 25px;
  margin-top: 16px;
  line-height: 20px;
}

.nav-tab.on {
  color: #2b579a;
  font-weight: 700;
}

.nav-top {
  box-sizing: border-box;
  display: flex;
  align-items: center;
  justify-content: center;
  width: 210px;
  height: 18px;
  margin: 11px 0 0 15px;
  background-color: #fff;
  border: 1px solid #c6c6c6;
  border-bottom: 0;
}

.tree {
  list-style: none;
  margin: 0 0 0 -13px;
  padding: 0;
  font-family: "Liberation Sans", "Noto Sans CJK SC", sans-serif;
  font-size: 12px;
  color: #555;
}

.tree li {
  position: relative;
  height: 21px;
  line-height: 20px;
  white-space: nowrap;
}

.tw {
  position: absolute;
  top: 6px;
  width: 0;
  height: 0;
  border-left: 6px solid transparent;
  border-bottom: 6px solid #666;
}

.lv1 {
  padding-left: 34px;
}

.lv1 .tw {
  left: 18px;
}

.lv2 {
  padding-left: 50px;
}

.lv2 .tw {
  left: 34px;
}

.lv3 {
  padding-left: 66px;
}

.lv1.sel {
  background: linear-gradient(#c2d6f2, #c2d6f2) 29px 0 / 208px 20px no-repeat;
}

/* rulers */
.vcol {
  flex: 0 0 24px;
  margin-left: 4px;
  display: flex;
  flex-direction: column;
}

.corner {
  width: 21px;
  height: 21px;
  margin-top: 3px;
  display: flex;
  align-items: center;
  justify-content: center;
  background-color: #fff;
  box-shadow: 0 0 0 1px #dcdcdc;
}

.corner-l {
  width: 6px;
  height: 6px;
  border-left: 2px solid #555;
  border-bottom: 2px solid #555;
}

.vruler {
  margin: 43px 0 0 2px;
  width: 17px;
  padding-top: 2px;
  display: flex;
  flex-direction: column;
  background: linear-gradient(#c4c4c4 98px, #fff 98px);
  flex: 1;
  overflow: hidden;
}

.vc,
.hc {
  box-sizing: border-box;
  display: flex;
  align-items: center;
  justify-content: center;
  font-size: 10px;
  line-height: 12px;
  color: #555;
  background-repeat: no-repeat;
}

.vc {
  flex: 0 0 37.700px;
  writing-mode: vertical-rl;
  transform: rotate(180deg);
  background-image: linear-gradient(#666, #666), linear-gradient(#666, #666), linear-gradient(#666, #666);
  background-size: 6px 1px, 2px 1px, 2px 1px;
  background-position: 5.500px 0, 7.500px 9px, 7.500px 28px;
}

.doc-col {
  flex: 0 0 794px;
  margin-left: 173px;
}

.hruler {
  position: relative;
  width: 793px;
  height: 16px;
  margin-top: 5px;
  background: linear-gradient(90deg, #c4c4c4 120px, #fff 120px, #fff 675px, #c4c4c4 675px);
}

.hcells {
  display: flex;
  margin-left: -13px;
  height: 16px;
  width: 806px;
  overflow: hidden;
  clip-path: inset(0 0 0 13px);
}

.hc {
  flex: 0 0 37.800px;
  background-image: linear-gradient(#666, #666), linear-gradient(#666, #666), linear-gradient(#666, #666);
  background-size: 1px 6px, 1px 2px, 1px 2px;
  background-position: 0 5px, 9px 7px, 28px 7px;
}

.marker-left {
  position: absolute;
  left: 113px;
  top: -3px;
}

.marker-right {
  position: absolute;
  left: 669px;
  top: 6px;
}

.page-tail {
  box-sizing: border-box;
  margin: 9px 0 0 2px;
  width: 792px;
  height: 23px;
  background-color: #fff;
  border: 1px solid #c6c6c6;
  border-top: 0;
}

.page {
  position: relative;
  box-sizing: border-box;
  margin: 15px 0 0 2px;
  width: 792px;
  height: 800px;
  padding: 95px 118px 0 118px;
  background-color: #fff;
  border: 1px solid #c6c6c6;
  border-bottom: 0;
  color: #111;
}

.crop {
  position: absolute;
  top: 71px;
  width: 24px;
  height: 23px;
  border-bottom: 1px solid #a0a0a0;
}

.crop-l {
  left: 93px;
  border-right: 1px solid #a0a0a0;
}

.crop-r {
  left: 671px;
  border-left: 1px solid #a0a0a0;
}

.h-1,
.h-2,
.h-3 {
  margin: 0;
  text-align: center;
  font-family: "Liberation Serif", "Noto Sans CJK SC", serif;
  white-space: nowrap;
}

.h-1 {
  position: relative;
  font-size: 29.300px;
  line-height: 40px;
  font-weight: 400;
}

.h-1 b {
  font-weight: 700;
}

.text-cursor {
  display: inline-block;
  width: 1px;
  height: 30px;
  margin-right: -1px;
  vertical-align: -6px;
  background-color: #000;
}

.h-2 {
  margin-top: 74px;
  height: 30px;
  font-size: 21px;
  line-height: 30px;
  font-weight: 400;
}

.h-2-x {
  margin-left: 2px;
  font-size: 16px;
  line-height: 1;
}

.h-3 {
  margin-top: 35px;
  font-size: 21px;
  line-height: 30px;
  font-weight: 700;
}

.body-text {
  margin-top: 33px;
  width: 544px;
  font-family: "Liberation Serif", "Noto Sans CJK SC", serif;
  font-size: 16px;
  line-height: 20.750px;
  text-align: justify;
}

.body-text p {
  margin: 0;
  text-indent: 32px;
}

.red {
  color: #e00000;
}

.cjk {
  font-family: "Noto Sans CJK SC", sans-serif;
  line-height: 1;
}

.cast {
  margin: 42px 0 0 76px;
  font-family: "Liberation Serif", "Noto Sans CJK SC", serif;
  font-size: 20px;
  line-height: 28px;
}

.cast-row {
  display: flex;
  height: 28px;
}

.cast-row.first {
  height: 30px;
}

.who {
  flex: 0 0 190px;
  display: grid;
  grid-template-columns: 27px 27px 27px;
}

.role {
  display: grid;
  grid-template-columns: 44px 20px;
}

.role.head {
  grid-template-columns: 35px 20px;
}

.ltr {
  font-size: 18px;
}

/* status bar */
.statusbar {
  position: relative;
  flex: 0 0 18px;
  box-sizing: border-box;
  display: flex;
  align-items: center;
  gap: 18px;
  padding-left: 6px;
  background-color: #f1f1f1;
  border-top: 1px solid #c6c6c6;
  line-height: 16px;
  color: #555;
}

.statusbar > span:nth-child(2) {
  margin-left: -2px;
}

.statusbar > span:nth-child(3) {
  margin-left: -1px;
}

.statusbar > span:nth-child(5) {
  margin-left: 1px;
}

.statusbar > span:nth-child(6) {
  margin-left: 3px;
}

.statusbar > span:nth-child(7) {
  margin-left: 2px;
}

.statusbar > svg {
  margin-left: -2px;
}

.st-page {
  word-spacing: 1.500px;
}

.views {
  position: absolute;
  left: 1145px;
  top: 0;
  bottom: 0;
  display: flex;
}

.vb {
  width: 38px;
  display: flex;
  align-items: center;
  justify-content: center;
}

.vb.on {
  background-color: #c6c6c6;
}

.zoom-bar {
  display: flex;
  align-items: center;
  margin-left: 3px;
}

.z-btn {
  width: 12px;
  text-align: center;
  font-size: 15px;
  font-weight: 700;
  color: #555;
}

.z-track {
  position: relative;
  width: 100px;
  height: 1px;
  margin: 0 1px;
  background-color: #888;
}

.z-thumb {
  position: absolute;
  left: 49px;
  top: -6px;
  width: 3px;
  height: 12px;
  background-color: #666;
}

.z-pct {
  margin-left: 13px;
}

/* context menu */
.menu {
  position: absolute;
  left: 761px;
  top: 114px;
  box-sizing: border-box;
  width: 223px;
  height: 158px;
  padding-top: 1px;
  background-color: #fff;
  border: 1px solid #c6c6c6;
  box-shadow: 1px 2px 3px rgba(0, 0, 0, 0.2);
  color: #777;
}

.menu-item {
  position: relative;
  height: 25px;
  line-height: 25px;
  padding-left: 31px;
  white-space: nowrap;
}

.menu-item.hot {
  background-color: #bfbfbf;
  color: #444;
}

.menu-ic {
  position: absolute;
  left: 4px;
  top: 4px;
}

.menu-sep {
  height: 1px;
  margin: 0 0 1px 31px;
  background-color: #dcdcdc;
}

.cursor {
  position: absolute;
  left: 887px;
  top: 158px;
}

.arrows {
  position: absolute;
  left: 0;
  top: 0;
  pointer-events: none;
}

.arrow-g {
  filter: drop-shadow(1px 2px 1px rgba(70, 20, 20, 0.5));
}

/* watermark */
.watermark {
  position: absolute;
  left: 1268px;
  top: 981px;
  display: flex;
  pointer-events: none;
}

.wm-text {
  display: flex;
  flex-direction: column;
}

.wm-cn {
  font-size: 21px;
  line-height: 28px;
  font-weight: 700;
  color: rgba(85, 140, 195, 0.85);
  white-space: nowrap;
}

.wm-url {
  margin-top: 1px;
  font-family: "Liberation Sans", sans-serif;
  font-size: 17px;
  line-height: 20px;
  color: rgba(90, 170, 90, 0.85);
  white-space: nowrap;
}
```
